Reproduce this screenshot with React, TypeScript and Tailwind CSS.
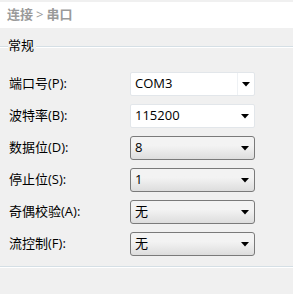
const rows = [
  { label: "端口号(P):", value: "COM3", editable: true, split: true },
  { label: "波特率(B):", value: "115200", editable: true, split: false },
  { label: "数据位(D):", value: "8", editable: false },
  { label: "停止位(S):", value: "1", editable: false },
  { label: "奇偶校验(A):", value: "无", editable: false },
  { label: "流控制(F):", value: "无", editable: false },
];

function Arrow() {
  return (
    <svg width="8" height="5" viewBox="0 0 8 5" className="shrink-0">
      <path d="M0 0h8L4 4.5z" fill="#000" />
    </svg>
  );
}

function Combo({ value, editable, split }: { value: string; editable: boolean; split?: boolean }) {
  if (editable) {
    return (
      <div className="flex h-6 w-[125px] items-center rounded-[2px] border border-[#e2e6ea] bg-white">
        <span className="flex-1 pl-[4px] text-[13px] text-black">{value}</span>
        <div
          className={`flex h-full w-[16px] items-center justify-center ${
            split ? "border-l border-[#eef1f4]" : ""
          } mr-[1px]`}
        >
          <Arrow />
        </div>
      </div>
    );
  }
  return (
    <div className="flex h-6 w-[125px] items-center rounded-[3px] border border-[#7a7a7a] bg-gradient-to-b from-[#f3f3f3] from-40% to-[#dddddd] pr-[5px]">
      <span className="flex-1 pl-[4px] text-[13px] text-black">{value}</span>
      <Arrow />
    </div>
  );
}

export default function App() {
  return (
    <div
      className="h-[294px] w-[293px] overflow-hidden bg-[#f0f0f0]"
      style={{ fontFamily: '"Open Sans", "Noto Sans CJK SC", sans-serif' }}
    >
      <div className="mt-[2px] flex h-[26px] items-center bg-white pl-[7px] text-[13px] font-bold text-[#9a9a9a]">
        连接 <span className="mx-[3px] font-normal">&gt;</span> 串口
      </div>

      <div className="relative mt-[9px] border-b border-b-[#d5dfe5] pb-[10px]">
        <div className="pointer-events-none absolute left-0 right-0 top-[9px] border-t border-[#d5dfe5]" />
        <div className="pointer-events-none absolute left-0 right-0 top-[10px] border-t border-white" />
        <div className="relative flex h-[16px] items-center pl-[8px]">
          <span className="bg-[#f0f0f0] pr-[2px] text-[13px] leading-none text-black">常规</span>
        </div>

        <div className="mt-[19px] flex flex-col gap-2">
          {rows.map((r) => (
            <div key={r.label} className="flex items-center">
              <span className="w-[130px] pl-[9px] text-[13px] text-black">{r.label}</span>
              <Combo value={r.value} editable={r.editable} split={r.split} />
            </div>
          ))}
        </div>
      </div>
      <div className="h-px bg-white" />
    </div>
  );
}
